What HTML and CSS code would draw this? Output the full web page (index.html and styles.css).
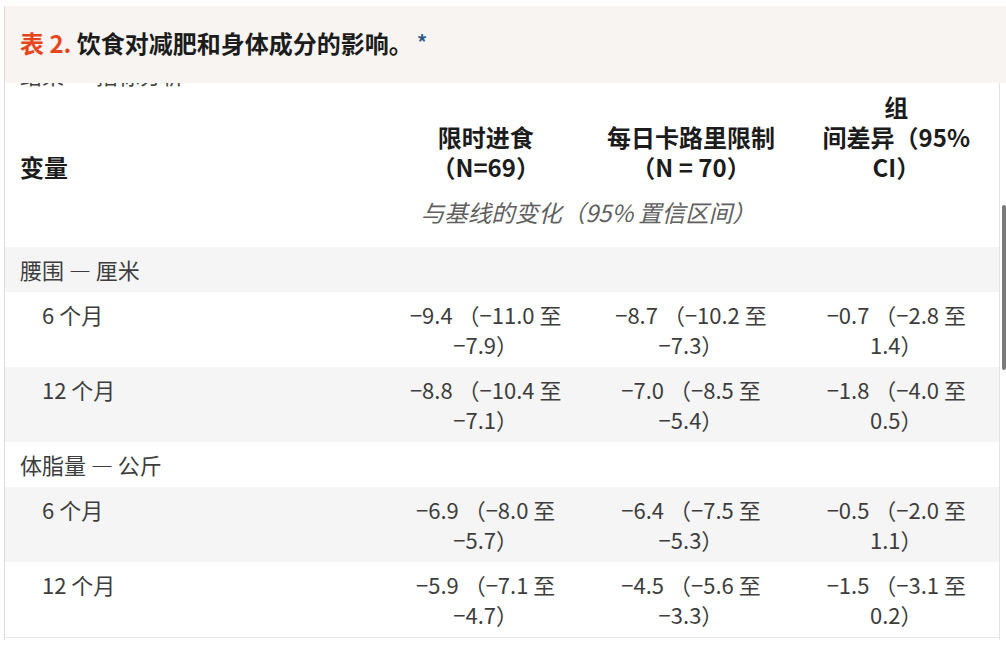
FILE: index.html
```html
<!DOCTYPE html>
<html lang="zh-CN">
<head>
<meta charset="utf-8">
<link rel="stylesheet" href="styles.css">
</head>
<body>
<div class="frame">
  <div class="caption"><span class="label">表 2.</span>&nbsp;饮食对减肥和身体成分的影响。<sup class="note">*</sup></div>
  <div class="body">
    <div class="viewport">
      <div class="clipped">结果 — 指标分析</div>
      <table class="data">
        <colgroup>
          <col class="c-var">
          <col class="c-val">
          <col class="c-val">
          <col class="c-val">
        </colgroup>
        <thead>
          <tr class="head">
            <th class="var">变量</th>
            <th>限时进食<br>（N=69）</th>
            <th>每日卡路里限制<br>（N = 70）</th>
            <th>组<br>间差异（95%<br>CI）</th>
          </tr>
          <tr class="sub">
            <td></td>
            <td colspan="2">与基线的变化（95% 置信区间）</td>
            <td></td>
          </tr>
        </thead>
        <tbody>
          <tr class="section"><td colspan="4">腰围 — 厘米</td></tr>
          <tr class="row white">
            <td class="lab">6 个月</td>
            <td>−9.4 （−11.0 至<br>−7.9）</td>
            <td>−8.7 （−10.2 至<br>−7.3）</td>
            <td>−0.7 （−2.8 至<br>1.4）</td>
          </tr>
          <tr class="row grey">
            <td class="lab">12 个月</td>
            <td>−8.8 （−10.4 至<br>−7.1）</td>
            <td>−7.0 （−8.5 至<br>−5.4）</td>
            <td>−1.8 （−4.0 至<br>0.5）</td>
          </tr>
          <tr class="section white"><td colspan="4">体脂量 — 公斤</td></tr>
          <tr class="row grey">
            <td class="lab">6 个月</td>
            <td>−6.9 （−8.0 至<br>−5.7）</td>
            <td>−6.4 （−7.5 至<br>−5.3）</td>
            <td>−0.5 （−2.0 至<br>1.1）</td>
          </tr>
          <tr class="row white last">
            <td class="lab">12 个月</td>
            <td>−5.9 （−7.1 至<br>−4.7）</td>
            <td>−4.5 （−5.6 至<br>−3.3）</td>
            <td>−1.5 （−3.1 至<br>0.2）</td>
          </tr>
        </tbody>
      </table>
    </div>
    <div class="track"><div class="thumb"></div></div>
  </div>
</div>
</body>
</html>
```

FILE: styles.css
```css
html, body {
  margin: 0;
  padding: 0;
  background: #ffffff;
}
body {
  font-family: "Noto Sans CJK SC", "Noto Sans", sans-serif;
  color: #3d3d3d;
}
.frame {
  margin: 6px 0 0 4px;
  border-left: 1px solid #dcdcdc;
  height: 634px;
  display: flex;
  flex-direction: column;
}
.caption {
  height: 77px;
  flex: none;
  background: #f7f4f2;
  display: flex;
  align-items: center;
  padding-left: 15px;
  padding-bottom: 5px;
  box-sizing: border-box;
  font-size: 24px;
  font-weight: 700;
  color: #1c1c1c;
}
.caption .label {
  color: #e5461c;
}
.caption .note {
  color: #2d5b8c;
  font-size: 20px;
  margin-left: 4px;
  position: relative;
  top: -1px;
  font-weight: 700;
}
.body {
  flex: 1;
  display: flex;
  min-height: 0;
}
.viewport {
  flex: 1;
  border-right: 1px solid #e3e3e3;
  overflow: hidden;
}
.track {
  width: 6px;
  flex: none;
}
.thumb {
  margin-top: 122px;
  margin-left: 2px;
  width: 4px;
  height: 165px;
  background: #7b7b7b;
  border-radius: 3px;
}
.clipped {
  margin-top: -24px;
  height: 30px;
  line-height: 30px;
  font-size: 22px;
  padding-left: 15px;
  color: #444;
}
.data {
  width: 100%;
  border-collapse: collapse;
  table-layout: fixed;
  font-size: 22px;
  line-height: 30px;
}
.c-var {
  width: 378px;
}
.data th {
  font-weight: 700;
  font-size: 24px;
  color: #1c1c1c;
  text-align: center;
  vertical-align: bottom;
  padding: 0 4px;
  height: 93px;
  box-sizing: border-box;
}
.data th.var {
  text-align: left;
  padding-left: 15px;
}
.sub td {
  padding: 15px 0 20px;
  text-align: center;
  font-style: italic;
  font-size: 23.5px;
  color: #606060;
}
.section td {
  padding: 7px 15px 8px;
  background: #f5f5f5;
  color: #3d3d3d;
}
.section.white td {
  background: #ffffff;
}
.row td {
  padding: 7px 8px 8px;
  text-align: center;
  vertical-align: top;
}
.row td.lab {
  text-align: left;
  padding-left: 37px;
}
.row.grey td {
  background: #f5f5f5;
}
.row.white td {
  background: #ffffff;
}
.row.last td {
  border-bottom: 1px solid #e8e8e8;
}
```
